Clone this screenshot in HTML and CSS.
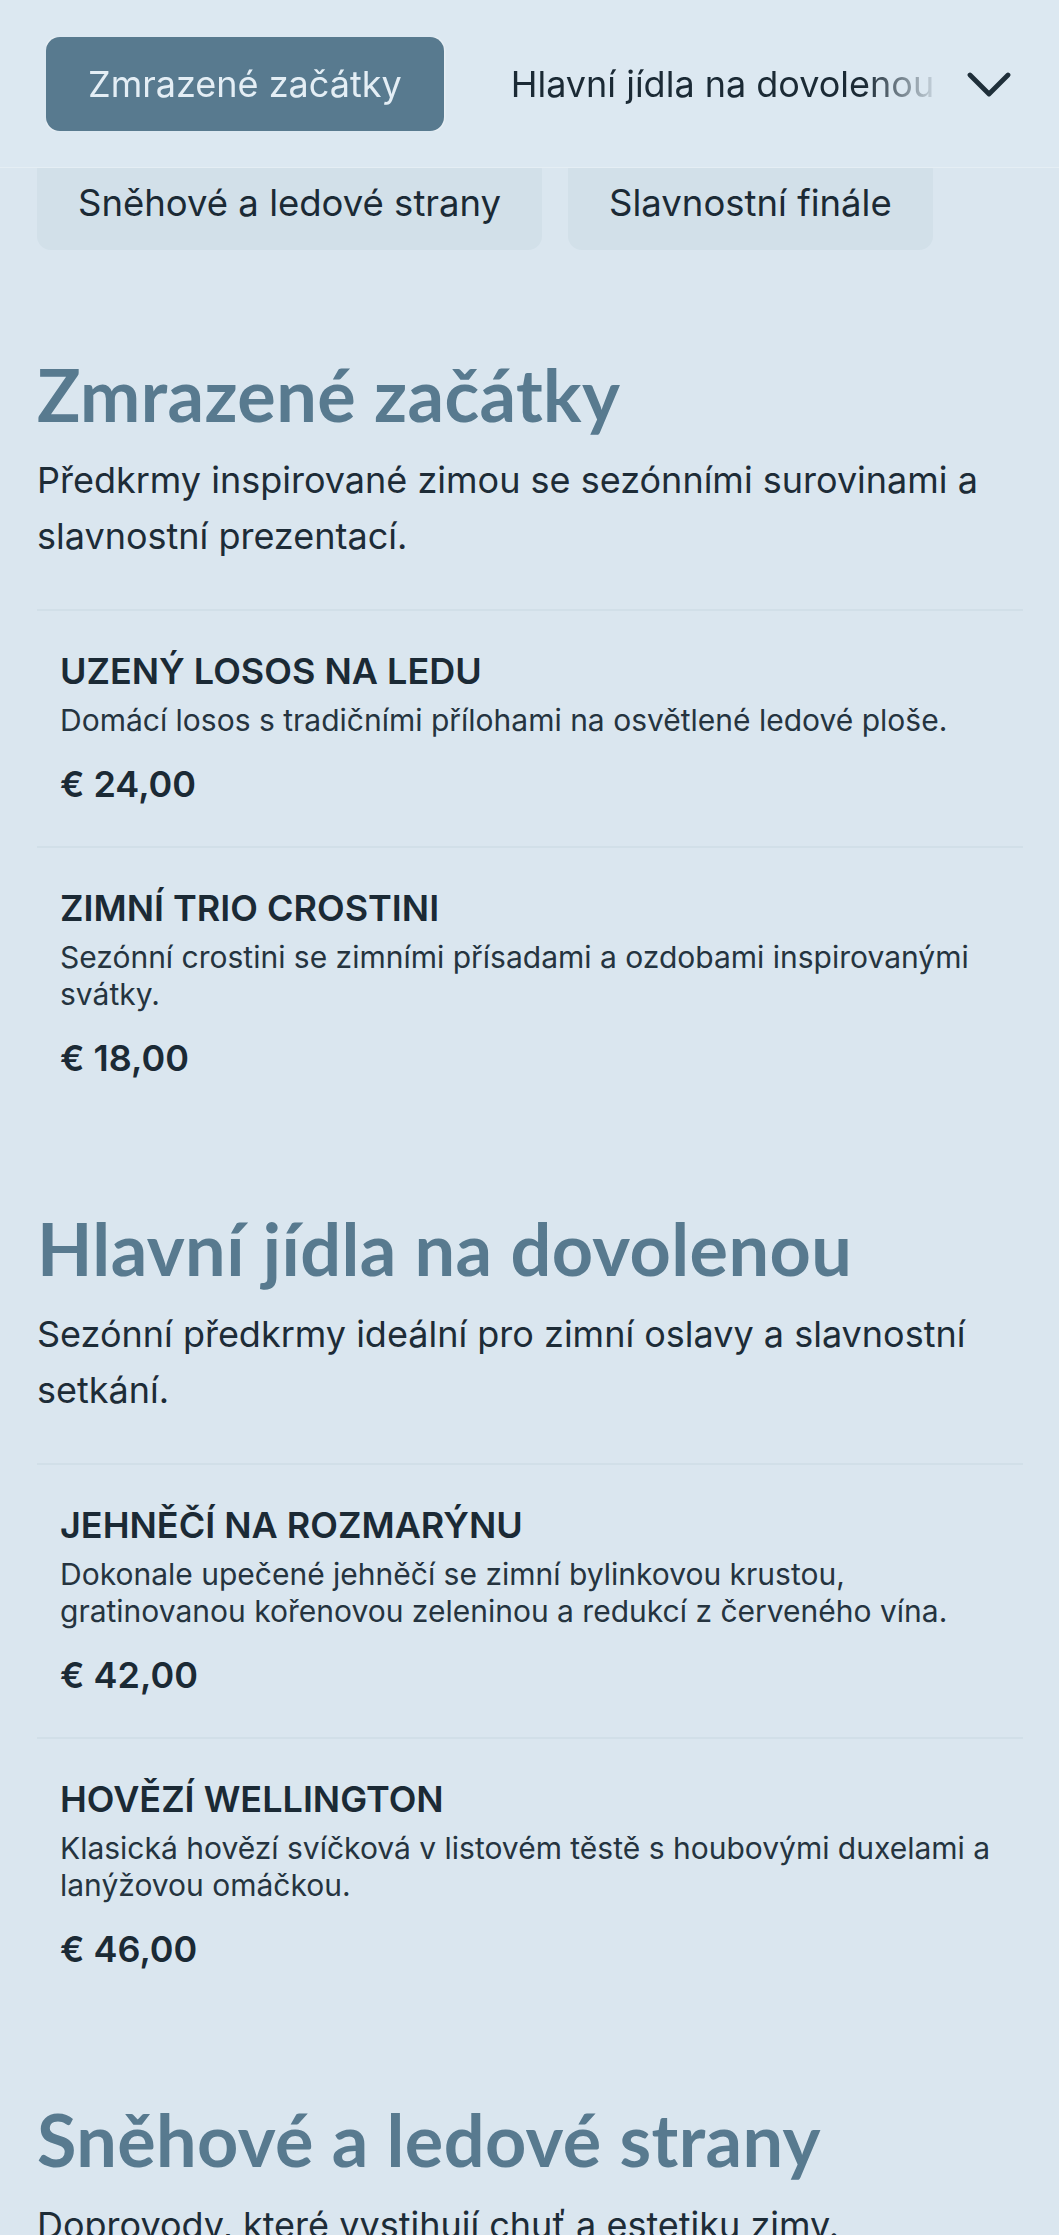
FILE: index.html
```html
<!DOCTYPE html>
<html lang="cs">
<head>
<meta charset="utf-8">
<title>Menu</title>
<link rel="stylesheet" href="styles.css">
</head>
<body>
<header class="topbar">
  <nav class="tabs-scroll">
    <a class="tab tab-active" href="#s1">Zmrazené začátky</a>
    <a class="tab" href="#s2">Hlavní jídla na dovolenou</a>
    <a class="tab" href="#s3">Sněhové a ledové strany</a>
  </nav>
  <button class="more" aria-label="Další kategorie">
    <svg width="44" height="28" viewBox="0 0 44 28"><path d="M3 4 L22 23 L41 4" fill="none" stroke="#1f2f3a" stroke-width="4.8" stroke-linecap="round" stroke-linejoin="round"/></svg>
  </button>
</header>
<div class="pills">
  <a class="pill" href="#s3">Sněhové a ledové strany</a>
  <a class="pill" href="#s4">Slavnostní finále</a>
</div>
<main class="menu">
  <section class="section" id="s1">
    <h2 class="section-title">Zmrazené začátky</h2>
    <p class="section-desc">Předkrmy inspirované zimou se sezónními surovinami a slavnostní prezentací.</p>
    <article class="item">
      <h3 class="item-name">UZENÝ LOSOS NA LEDU</h3>
      <p class="item-desc">Domácí losos s tradičními přílohami na osvětlené ledové ploše.</p>
      <p class="item-price">€ 24,00</p>
    </article>
    <article class="item">
      <h3 class="item-name">ZIMNÍ TRIO CROSTINI</h3>
      <p class="item-desc">Sezónní crostini se zimními přísadami a ozdobami inspirovanými svátky.</p>
      <p class="item-price">€ 18,00</p>
    </article>
  </section>
  <section class="section" id="s2">
    <h2 class="section-title">Hlavní jídla na dovolenou</h2>
    <p class="section-desc">Sezónní předkrmy ideální pro zimní oslavy a slavnostní setkání.</p>
    <article class="item">
      <h3 class="item-name">JEHNĚČÍ NA ROZMARÝNU</h3>
      <p class="item-desc">Dokonale upečené jehněčí se zimní bylinkovou krustou, gratinovanou kořenovou zeleninou a redukcí z červeného vína.</p>
      <p class="item-price">€ 42,00</p>
    </article>
    <article class="item">
      <h3 class="item-name">HOVĚZÍ WELLINGTON</h3>
      <p class="item-desc">Klasická hovězí svíčková v listovém těstě s houbovými duxelami a lanýžovou omáčkou.</p>
      <p class="item-price">€ 46,00</p>
    </article>
  </section>
  <section class="section" id="s3">
    <h2 class="section-title">Sněhové a ledové strany</h2>
    <p class="section-desc">Doprovody, které vystihují chuť a estetiku zimy.</p>
    <article class="item">
      <h3 class="item-name">PEČENÁ KOŘENOVÁ ZELENINA</h3>
      <p class="item-desc">Sezónní zelenina pečená s bylinkami a medem.</p>
      <p class="item-price">€ 12,00</p>
    </article>
  </section>
  <section class="section" id="s4">
    <h2 class="section-title">Slavnostní finále</h2>
    <p class="section-desc">Dezerty, které korunují zimní večer.</p>
  </section>
</main>
</body>
</html>
```
FILE: styles.css
```css
* { box-sizing: border-box; }

html, body {
  margin: 0;
  padding: 0;
  background: #dae6ef;
  font-family: Inter, "Noto Sans", "Liberation Sans", sans-serif;
  color: #1d2c37;
}

.topbar {
  position: sticky;
  top: 0;
  z-index: 10;
  display: flex;
  align-items: center;
  height: 168px;
  padding: 0 36px 0 46px;
  background: #dce8f1;
  border-bottom: 1px solid #e5eef4;
}

.tabs-scroll {
  flex: 1;
  display: flex;
  gap: 25px;
  overflow: hidden;
  -webkit-mask-image: linear-gradient(to right, #000 calc(100% - 78px), transparent);
  mask-image: linear-gradient(to right, #000 calc(100% - 78px), transparent);
}

.tab {
  flex: none;
  display: flex;
  align-items: center;
  height: 94px;
  padding: 0 42px;
  border-radius: 14px;
  font-size: 36px;
  font-weight: 400;
  color: #1b2a35;
  text-decoration: none;
  white-space: nowrap;
}

.tab-active {
  background: #587a8f;
  color: #e4eef5;
  box-shadow: 0 0 0 1.5px #e6eef4;
}

.more {
  flex: none;
  width: 80px;
  height: 94px;
  display: flex;
  align-items: center;
  justify-content: flex-end;
  padding: 0 12px 0 0;
  border: none;
  background: transparent;
}

.more svg { display: block; margin-top: 2px; }

.pills {
  display: flex;
  gap: 26px;
  padding: 0 37px;
  margin-top: -12px;
  margin-bottom: 16px;
}

.pill {
  display: flex;
  align-items: center;
  height: 94px;
  padding: 0 41px;
  border-radius: 14px;
  background: #d2e0e9;
  font-size: 36.5px;
  color: #1b2a35;
  text-decoration: none;
  white-space: nowrap;
}

.menu {
  padding: 0 36px 0 37px;
}

.section {
  padding-top: 90px;
}

.section-title {
  margin: 0;
  font-family: Lato, "Noto Sans", sans-serif;
  font-weight: 700;
  font-size: 72px;
  line-height: 76px;
  color: #587a8f;
  letter-spacing: 0.4px;
}

.section-desc {
  margin: 20px 0 45px;
  font-size: 36px;
  line-height: 56px;
  color: #1d2c37;
}

.item {
  border-top: 2px solid #d1dfe8;
  padding: 40px 23px 42px;
}

.item-name {
  margin: 0;
  font-size: 36px;
  line-height: 40px;
  font-weight: 600;
  color: #1b2a35;
}

.item-desc {
  margin: 11px 0 0;
  font-size: 30px;
  line-height: 37px;
  color: #25343f;
}

.item-price {
  margin: 25px 0 0;
  font-size: 36px;
  line-height: 40px;
  font-weight: 600;
  color: #1b2a35;
}
```
